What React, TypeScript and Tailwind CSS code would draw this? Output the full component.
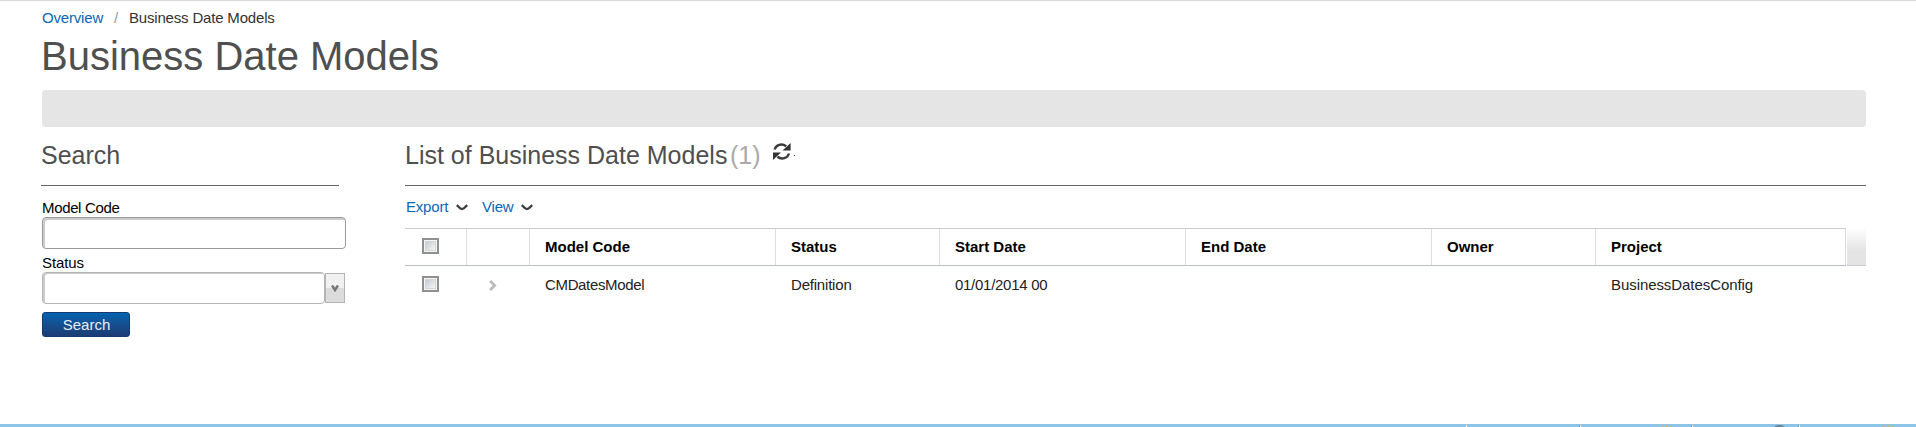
import React from "react";

type Column = { label: string; value: string; width: string; tracking: string };

const columns: Column[] = [
  { label: "Model Code", value: "CMDatesModel", width: "w-[246px]", tracking: "tracking-[-0.35px]" },
  { label: "Status", value: "Definition", width: "w-[164px]", tracking: "tracking-[-0.2px]" },
  { label: "Start Date", value: "01/01/2014 00", width: "w-[246px]", tracking: "tracking-[-0.28px]" },
  { label: "End Date", value: "", width: "w-[246px]", tracking: "" },
  { label: "Owner", value: "", width: "w-[164px]", tracking: "" },
  { label: "Project", value: "BusinessDatesConfig", width: "w-[250px]", tracking: "tracking-[-0.07px]" },
];

function Checkbox() {
  return (
    <span className="block h-[16px] w-[17px] border-2 border-[#8e8f8f] bg-[#f4f4f4] p-px">
      <span className="block h-full w-full border border-[#d3d5d8] bg-linear-to-br from-[#c5cad4] to-[#f6f6f6]" />
    </span>
  );
}

function MenuItem({ label, width }: { label: string; width: string }) {
  return (
    <span className={`flex h-[18px] items-center justify-between tracking-[-0.2px] ${width}`}>
      <span className="text-[#0a67b5]">{label}</span>
      <svg width="12" height="7" viewBox="0 0 12 7">
        <path d="M0.8 1.2L4 4.2Q6 5.8 8 4.2L11.2 1.2" fill="none" stroke="#3f3f3f" strokeWidth="2.3" />
      </svg>
    </span>
  );
}

function RefreshIcon() {
  return (
    <svg width="19" height="19" viewBox="0 0 19 19" className="mt-[2px]">
      <path d="M2.6 7.5C4 3 9.5 0.8 14.2 4.2" fill="none" stroke="#3a3a3a" strokeWidth="2.4" />
      <path d="M18.6 1V8.6H10.6Z" fill="#333" />
      <path d="M17 11.5C15.6 16 10 18.2 5.4 14.8" fill="none" stroke="#3a3a3a" strokeWidth="2.4" />
      <path d="M1 18V10.4H9Z" fill="#333" />
    </svg>
  );
}

function BottomStrip() {
  return (
    <svg width="1916" height="3" viewBox="0 0 1916 3" className="block">
      <path d="M1466 1h1v2h-1zM1580 1h1v2h-1zM1692 1h1v2h-1zM1799 1h1v2h-1z" fill="#fff" />
      <path d="M1579 1h1v2h-1zM1691 1h1v2h-1zM1798 1h1v2h-1z" fill="#7894a5" />
      <path d="M1662 2h2v1h-2zM1666 1h2v2h-2zM1670 2h2v1h-2zM1882 2h3v1h-3zM1887 1h2v2h-2zM1891 2h3v1h-3z" fill="#d9b65c" />
      <path d="M1774 3L1777 1H1782L1785 3Z" fill="#6f8795" />
    </svg>
  );
}

export default function App() {
  return (
    <div className="flex h-[427px] w-[1916px] flex-col overflow-hidden border-t border-[#d9d9d9] bg-white font-['Liberation_Sans',Arial,sans-serif] text-[15px] leading-[18px] text-black">
      <nav className="flex h-[33px] pt-[8px] pl-[42px] tracking-[-0.18px] text-[#333]">
        <a className="w-[72px] text-[#0a67b5]">Overview</a>
        <span className="w-[15px] text-[#999]">/</span>
        <span>Business Date Models</span>
      </nav>
      <h1 className="h-[56px] pl-[41px] text-[40px] leading-[44px] text-[#4f4f4f]">Business Date Models</h1>
      <div className="ml-[42px] h-[37px] w-[1824px] shrink-0 rounded-[4px] bg-[#e5e5e5]" />
      <div className="flex grow">
        <aside className="ml-[41px] w-[364px] shrink-0">
          <h2 className="h-[59px] w-[298px] border-b border-[#666] pt-[13px] text-[25px] leading-[30px] text-[#4f4f4f]">Search</h2>
          <div className="flex flex-col pl-px">
            <label className="h-[31px] pt-[13px] tracking-[-0.35px]">Model Code</label>
            <div className="h-[32px] w-[304px] rounded-[4px] border border-[#999] shadow-[inset_2px_2px_0_#ccc]" />
            <label className="h-[23px] pt-[5px] tracking-[-0.1px]">Status</label>
            <div className="flex h-[32px] items-center">
              <div className="h-[32px] w-[283px] rounded-[4px] border border-[#b5b5b5] shadow-[inset_2px_1px_0_#ccc]" />
              <div className="flex h-[30px] w-[20px] items-center justify-center border border-[#b3b3b8] bg-linear-to-b from-[#f1f1f1] from-50% to-[#dcdcdc] to-50%">
                <svg width="8" height="7" viewBox="0 0 8 7">
                  <path d="M1 0.5L4 5L7 0.5" fill="none" stroke="#777" strokeWidth="2.6" />
                </svg>
              </div>
            </div>
            <button className="mt-[8px] h-[25px] w-[88px] rounded-[3px] border border-[#153c6e] bg-linear-to-b from-[#0063b0] to-[#1b3c72] pl-px leading-[23px] text-[#e8eef5]">Search</button>
          </div>
        </aside>
        <main className="w-[1461px]">
          <h2 className="flex h-[59px] border-b border-[#666] pt-[13px] text-[25px] leading-[30px] text-[#4f4f4f]">
            <span className="w-[325px] whitespace-nowrap">List of Business Date Models</span>
            <span className="w-[42px] text-[#aaa]">(1)</span>
            <RefreshIcon />
            <span className="mt-[15px] ml-[3px] h-px w-px bg-[#333]" />
          </h2>
          <div className="flex h-[42px] gap-[14px] pt-[12px] pl-px">
            <MenuItem label="Export" width="w-[62px]" />
            <MenuItem label="View" width="w-[51px]" />
          </div>
          <div className="flex h-[38px]">
            <div className="flex w-[1441px] border-t border-b border-t-[#ccc] border-b-[#b9bec7] font-bold">
              <div className="flex w-[62px] shrink-0 border-r border-[#ddd] pt-[9px] pl-[17px]"><Checkbox /></div>
              <div className="w-[63px] shrink-0 border-r border-[#ddd]" />
              {columns.map((c) => (
                <div key={c.label} className={`shrink-0 border-r border-[#ddd] pt-[9px] pl-[15px] ${c.width}`}>{c.label}</div>
              ))}
            </div>
            <div className="ml-px h-[38px] w-[19px] border-b border-[#c6c9d0] bg-linear-to-b from-white to-[#e4e4e4] to-60%" />
          </div>
          <div className="flex h-[38px] text-[#222]">
            <div className="w-[62px] shrink-0 pt-[10px] pl-[17px]"><Checkbox /></div>
            <div className="w-[63px] shrink-0 pt-[14px] pl-[22px]">
              <svg width="8" height="11" viewBox="0 0 8 11">
                <path d="M1.2 1L5.6 5.5L1.2 10" fill="none" stroke="#bbb" strokeWidth="2.8" />
              </svg>
            </div>
            {columns.map((c) => (
              <div key={c.label} className={`shrink-0 pt-[10px] pl-[15px] ${c.width} ${c.tracking}`}>{c.value}</div>
            ))}
          </div>
        </main>
      </div>
      <footer className="h-[3px] shrink-0 bg-[#8dc5e8]">
        <BottomStrip />
      </footer>
    </div>
  );
}
